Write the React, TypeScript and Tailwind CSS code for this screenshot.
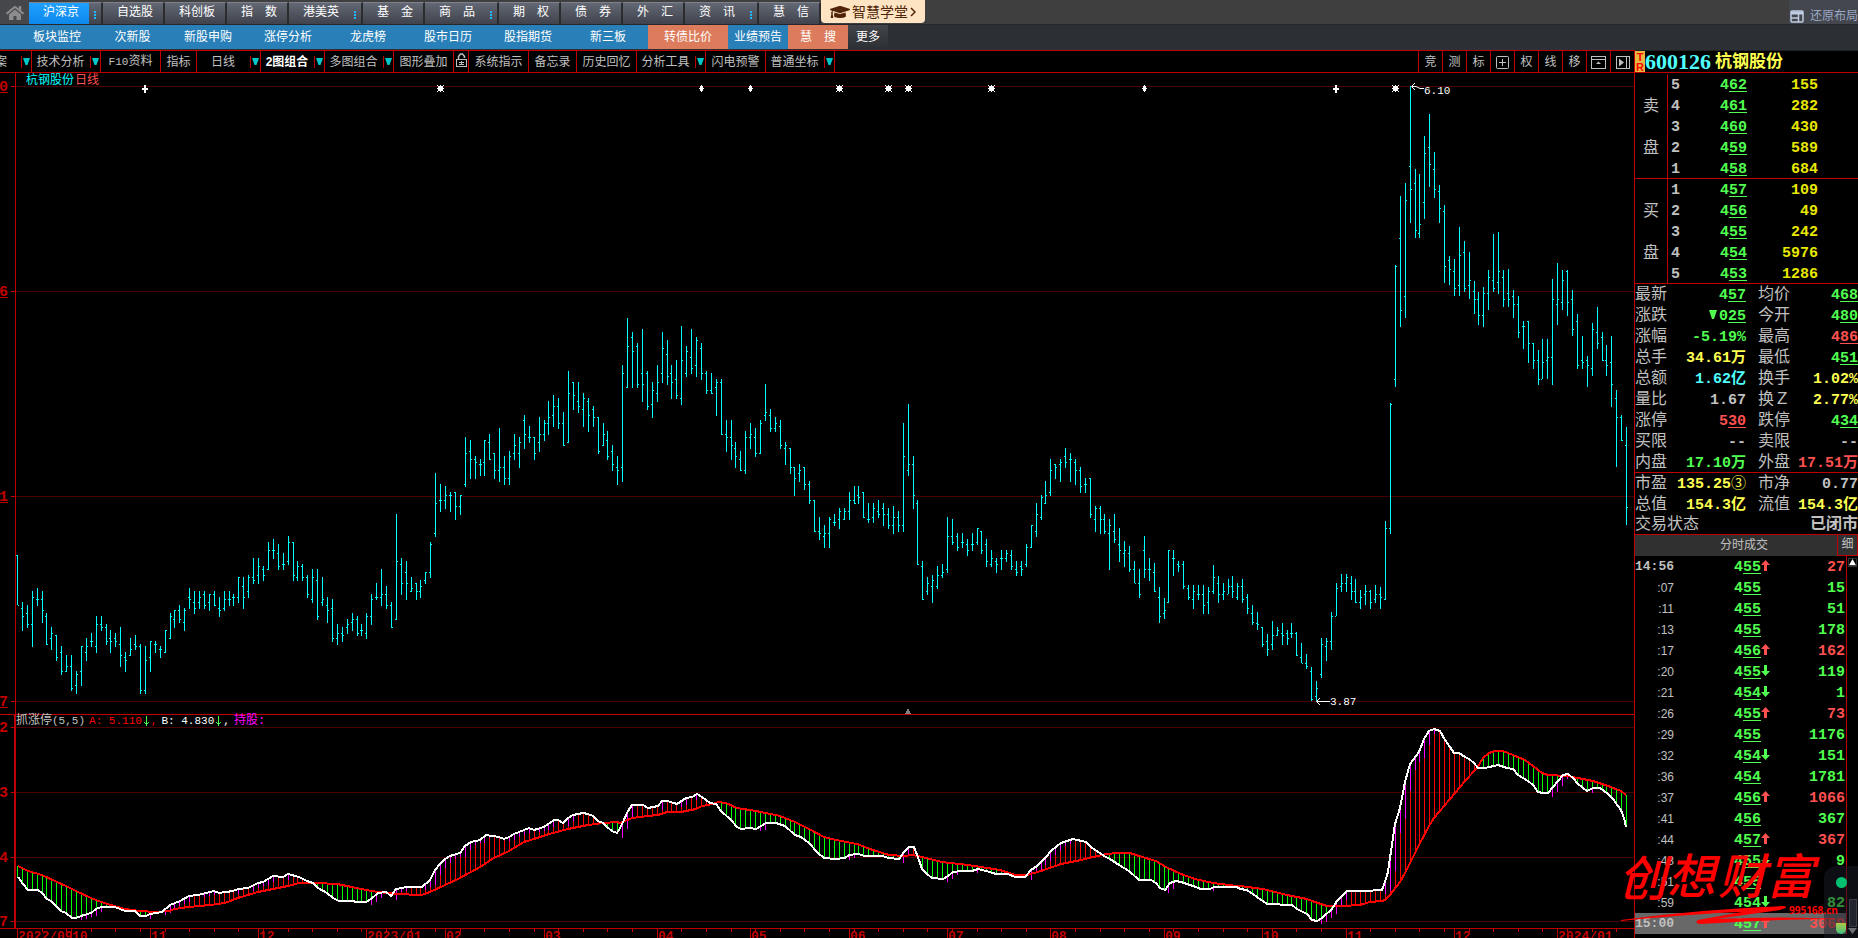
import React from "react";
import { FaGraduationCap, FaHome } from "react-icons/fa";

/* ---------- price data ---------- */

type Bar = [x: number, high: number, low: number, open: number, close: number];

interface Sheet {
  left: number;
  top: number;
  sx: number;
  sy: number;
  rows: string;
}

// Every row is "x high low open close", in the sheet's own units.
const priceSheets: Sheet[] = [
  {
    left: 0,
    top: 320,
    sx: 2.529,
    sy: 3,
    rows: `44 706 857 706 856,57 846 933 865 889,69 855 924 880 913,82 813 981 913 831,95 804 858 838 838,107 813 909 838 871,117 879 975 889 973,130 921 990 955 940,143 945 1023 946 1012,155 978 1065 997 1054,168 1005 1056 1054 1039,181 1005 1113 1039 1105,193 1053 1122 1096 1063,206 978 1098 1054 979,218 954 1023 997 979,231 939 981 964 964,244 888 999 979 913,256 888 933 913 922,269 912 975 922 964,279 930 999 955 964,292 939 981 955 964,304 921 1041 973 1006,317 996 1056 1012 1021,330 954 1008 1006 988,342 945 990 973 979,355 972 1122 979 1111,368 978 1122 1111 1021,380 963 1056 1012 964,393 963 999 973 973,406 978 1014 988 988,418 930 999 997 931,431 879 957 955 889,441 870 924 898 871,454 855 909 871 898,466 864 933 907 871,479 804 867 831 838,492 813 882 847 865,504 813 867 847 831,517 813 867 823 856,530 822 873 847 823,542 813 858 823 856,555 831 891 865 871,568 813 873 865 838,580 813 858 838 838,590 822 858 831 831,603 771 849 831 772,616 771 867 799 831,628 765 834 814 772,641 714 792 772 781,653 714 792 766 739,666 738 783 748 766,679 666 750 748 691,691 657 717 691 691,704 672 750 700 739,717 699 750 733 733,729 648 735 724 667,742 666 783 667 766,752 723 783 772 739,765 732 783 739 772,777 765 834 772 823,790 747 849 838 772,803 747 900 781 889,815 771 858 847 838,828 831 909 856 871,841 837 966 865 955,853 912 975 955 940,866 921 966 940 946,879 897 942 922 913,891 879 933 907 898,904 888 948 898 940,914 912 948 931 931,927 879 957 940 889,939 822 915 889 838,952 789 840 831 831,965 747 858 831 823,977 798 867 823 856,990 846 924 856 922,1002 582 900 898 724,1015 714 825 733 790,1028 723 840 757 790,1040 771 816 814 805,1053 789 840 790 814,1063 780 834 814 799,1076 756 792 781 757,1088 666 774 757 673,1101 459 651 640 550,1114 492 576 541 541,1126 498 567 541 526,1139 516 576 526 526,1151 516 600 517 559,1164 525 585 559 526,1177 351 501 493 400,1190 360 477 394 418,1202 408 477 418 427,1215 417 468 433 433,1225 360 468 427 361,1238 342 420 367 418,1250 399 477 400 451,1263 324 486 451 442,1275 408 495 442 475,1288 393 495 475 409,1301 342 420 400 376,1314 351 444 400 367,1326 285 387 301 343,1339 318 369 352 352,1351 351 420 352 400,1364 291 396 367 343,1376 300 363 343 310,1387 243 345 310 292,1400 225 321 286 259,1412 234 327 259 310,1425 276 378 310 376,1437 153 369 367 220,1450 186 270 187 226,1463 186 279 244 259,1475 219 321 268 235,1488 234 336 244 286,1500 258 321 268 292,1513 291 402 292 394,1526 309 378 376 343,1536 333 420 361 409,1549 375 453 394 433,1561 408 495 442 451`,
  },
  {
    left: 600,
    top: 300,
    sx: 3,
    sy: 3,
    rows: `67 195 546 502 220,82 54 264 262 139,97 96 264 112 154,112 129 264 139 253,127 87 306 220 253,142 213 330 220 319,157 246 354 313 271,172 195 306 280 247,187 96 249 220 145,202 120 255 163 229,214 195 297 220 247,229 180 297 238 286,244 78 315 295 181,259 138 231 220 154,274 87 222 172 205,289 111 231 196 121,304 129 240 145 220,319 213 282 220 271,334 219 282 271 280,349 237 348 262 247,364 237 405 247 403,379 360 456 403 412,394 360 480 412 436,406 426 504 445 469,421 453 513 478 511,436 393 522 511 412,451 369 447 412 403,466 384 471 412 460,481 360 462 460 370,496 252 363 346 337,511 327 396 346 385,526 351 396 385 370,541 360 447 379 436,556 426 495 445 436,571 444 522 445 502,583 501 588 502 535,598 492 546 520 511,613 501 570 502 553,628 543 612 553 601,643 600 696 601 694,658 651 720 694 700,673 675 744 709 700,688 651 744 700 658,703 642 678 667 667,718 624 687 658 634,733 624 660 658 634,748 576 660 634 601,763 558 612 601 610,775 558 612 586 592,790 576 654 577 652,805 609 669 658 658,820 609 669 652 625,835 600 654 634 643,850 609 678 625 643,865 624 687 643 676,880 618 702 676 652,895 633 696 652 676,910 369 696 676 469,925 312 528 511 493,940 468 627 493 586,952 600 795 610 793,967 783 900 799 898,982 831 885 874 850,997 825 909 859 841,1012 798 867 859 826,1027 792 834 826 817,1042 651 819 808 709,1057 657 735 709 727,1072 699 753 709 742,1087 699 744 727 727,1102 717 768 733 751,1117 699 753 733 733,1132 684 735 727 685,1144 693 762 694 751,1159 717 801 733 784,1174 750 801 793 775,1189 774 819 784 793,1204 750 810 775 775,1219 750 786 775 760,1234 750 810 766 799,1249 783 828 808 817,1264 783 828 799 808,1279 732 801 793 742,1294 675 744 742 676,1309 609 711 694 643,1324 585 660 652 592,1336 543 612 610 586,1351 477 588 577 511,1366 492 537 493 502,1381 477 546 493 487,1396 444 504 469 487,1411 459 546 478 478,1426 477 555 487 511,1441 501 579 511 559,1456 534 579 553 553,1471 534 654 535 643,1486 618 696 658 625,1501 618 702 625 658,1513 642 702 658 694,1528 657 810 700 676,1543 642 729 694 718,1558 684 786 733 750`,
  },
  {
    left: 1110,
    top: 70,
    sx: 2.958,
    sy: 2.45,
    rows: `42 1156 1218 1184 1177,57 1168 1232 1184 1224,72 1203 1259 1224 1258,87 1223 1294 1258 1285,102 1142 1245 1177 1224,116 1196 1252 1224 1224,131 1210 1279 1231 1277,146 1269 1355 1292 1339,161 1296 1347 1332 1324,173 1176 1306 1305 1177,187 1176 1240 1197 1197,202 1203 1232 1211 1216,217 1203 1272 1212 1266,232 1264 1299 1270 1292,247 1264 1321 1297 1277,261 1264 1299 1285 1285,276 1264 1333 1285 1312,291 1269 1333 1305 1277,306 1215 1286 1277 1243,320 1242 1306 1258 1285,335 1257 1299 1285 1277,350 1249 1286 1285 1265,362 1242 1294 1265 1277,377 1257 1299 1292 1265,391 1249 1306 1265 1297,406 1284 1333 1292 1319,421 1311 1360 1332 1353,436 1330 1374 1355 1358,451 1365 1414 1366 1407,465 1384 1436 1400 1420,480 1352 1421 1407 1385,495 1365 1387 1385 1373,510 1357 1409 1380 1385,525 1372 1409 1380 1392,536 1357 1394 1380 1380,551 1379 1436 1380 1434,566 1406 1455 1439 1453,581 1433 1468 1453 1461,596 1465 1548 1473 1542,610 1499 1548 1535 1515,625 1392 1490 1481 1407,640 1392 1448 1412 1400,655 1330 1421 1400 1339,670 1257 1340 1339 1270,684 1237 1279 1265 1258,699 1237 1279 1258 1243,714 1242 1299 1258 1277,726 1249 1306 1277 1304,741 1276 1321 1304 1292,755 1264 1313 1285 1277,770 1276 1321 1277 1304,785 1264 1306 1297 1285,800 1269 1321 1285 1292,815 1107 1299 1297 1123,829 818 1137 1123 820,844 480 779 758 482,859 311 630 413 589,874 277 610 555 319,889 40 375 236 292,903 243 414 278 393,915 257 414 400 379,930 162 367 324 204,945 108 287 190 231,960 203 314 244 292,974 284 375 297 339,989 331 522 346 481,1004 458 529 466 489,1019 465 556 493 535,1034 385 556 528 454,1048 419 544 447 535,1063 446 563 528 515,1078 519 598 542 562,1090 546 625 562 601,1105 534 630 601 548,1119 492 590 548 508,1134 404 544 515 535,1149 399 549 520 493,1164 492 583 508 562,1178 488 583 547 562,1193 541 610 555 574,1208 554 657 574 643,1223 615 684 628 628,1238 615 718 616 670,1252 669 733 670 711,1267 688 772 711 758,1279 661 759 758 716,1294 661 759 711 704,1309 514 772 704 562,1323 473 625 574 562,1338 492 590 569 515,1353 492 603 493 569,1368 541 652 562 635,1383 600 733 616 724,1397 654 733 711 716,1412 703 779 711 724,1427 622 752 731 635,1442 581 684 643 670,1457 642 713 655 711,1468 676 752 711 724,1483 654 826 716 770,1498 784 975 804 851,1513 846 909 851 907,1528 877 1117 919 1073`,
  },
];

const parseRows = (rows: string) => rows.split(",").map((row) => row.trim().split(" ").map(Number));

const bars: Bar[] = priceSheets.flatMap(({ left, top, sx, sy, rows }) =>
  parseRows(rows).map(([x, ...levels]) => {
    const [h, l, o, c] = levels.map((v) => Math.floor(top + v / sy));
    return [Math.floor(left + x / sx), h, l, o, c] as Bar;
  }),
);

/* ---------- indicator data ---------- */

const fastSheets: Sheet[] = [
  {
    left: 0,
    top: 690,
    sx: 2.529,
    sy: 3,
    rows: `45 560,57 583,70 600,95 600,107 608,118 626,130 633,143 650,155 663,168 669,181 684,193 684,206 679,231 669,244 656,256 650,290 650,304 658,317 663,342 663,355 679,368 679,380 671,410 665,431 644,454 634,479 618,500 615,542 604,555 608,590 604,603 596,628 594,653 580,666 577,691 559,715 561,729 552,755 562,777 574,792 578,803 593,828 610,841 623,858 632,890 632,904 636,925 636,939 626,957 609,975 607,990 618,1002 598,1030 591,1066 591,1088 570,1101 540,1114 522,1126 508,1139 498,1164 490,1177 468,1190 456,1215 449,1228 434,1262 440,1275 447,1288 442,1301 432,1338 414,1351 420,1376 410,1400 389,1412 389,1425 400,1437 384,1450 375,1475 370,1488 372,1500 379,1513 393,1526 398,1536 410,1549 422,1561 430`,
  },
  {
    left: 620,
    top: 690,
    sx: 2.529,
    sy: 3,
    rows: `0 414,8 395,19 364,31 345,57 345,70 354,95 349,107 332,120 333,145 343,167 325,183 322,195 312,207 320,228 339,243 341,256 362,280 390,295 411,306 417,330 413,345 417,368 400,395 398,418 408,442 434,458 442,479 460,500 490,515 504,545 507,568 503,580 496,602 491,620 497,662 497,680 503,705 507,717 485,731 470,743 470,755 510,765 537,777 553,790 563,817 567,829 557,841 547,865 542,890 542,905 536,925 543,950 551,980 551,1000 561,1025 560,1040 540,1054 528,1077 500,1090 482,1115 459,1145 446,1178 456,1190 471,1225 497,1240 508,1263 526,1287 542,1312 570,1343 570,1355 580,1366 594,1378 601,1390 580,1405 572,1420 575,1450 589,1470 597,1492 597,1503 590,1560 592`,
  },
  {
    left: 1240,
    top: 690,
    sx: 3,
    sy: 3,
    rows: `0 596,20 601,50 620,80 641,155 646,172 658,200 671,215 690,230 693,245 684,275 658,290 634,320 602,375 602,425 599,436 575,443 545,451 503,466 402,481 355,496 275,511 223,538 186,553 148,568 122,583 118,599 124,614 150,629 170,643 188,657 189,674 202,688 208,703 220,713 233,735 233,775 226,800 235,820 238,835 254,865 272,880 286,895 306,910 310,923 309,938 292,968 256,985 253,1000 265,1015 281,1042 303,1060 293,1080 294,1105 313,1120 327,1142 360,1152 383,1159 410`,
  },
];

const slowSheets: Sheet[] = [
  {
    left: 0,
    top: 690,
    sx: 2.529,
    sy: 3,
    rows: `45 529,70 543,107 555,143 575,168 587,193 604,231 624,256 635,280 646,317 656,355 663,393 667,431 663,441 657,479 650,530 645,568 638,603 624,653 607,691 596,729 588,755 580,800 578,853 583,890 591,939 603,1002 613,1066 614,1088 607,1126 585,1164 564,1190 546,1215 531,1250 504,1288 484,1326 457,1351 447,1388 433,1437 416,1488 405,1526 399,1561 397`,
  },
  {
    left: 620,
    top: 690,
    sx: 2.529,
    sy: 3,
    rows: `0 399,31 385,70 377,95 374,120 366,155 365,193 356,207 348,235 343,247 335,268 339,295 353,345 364,405 377,442 397,479 417,515 440,545 449,600 461,640 480,680 494,717 498,740 494,765 502,815 515,880 525,960 539,1000 554,1030 554,1065 542,1115 523,1165 509,1228 492,1260 488,1290 489,1312 498,1355 514,1380 532,1420 551,1455 567,1500 580,1560 587`,
  },
  {
    left: 1240,
    top: 690,
    sx: 3,
    sy: 3,
    rows: `0 587,70 598,140 616,200 627,215 634,260 647,310 648,360 644,390 637,425 634,436 629,451 614,481 575,496 548,511 520,538 466,568 407,583 385,629 327,674 274,710 233,730 205,748 188,765 182,790 182,820 195,855 210,880 229,905 248,925 254,980 257,1015 265,1060 274,1105 288,1142 303,1159 315`,
  },
];

const toCurve = (sheets: Sheet[]) =>
  sheets.flatMap(({ left, top, sx, sy, rows }) => parseRows(rows).map(([x, y]) => [left + x / sx, top + y / sy]));

const fast = toCurve(fastSheets);
const slow = toCurve(slowSheets);

const valueAt = (curve: number[][], x: number) => {
  const i = curve.findIndex((p) => p[0] >= x);
  if (i < 0) return curve[curve.length - 1][1];
  if (i === 0) return curve[0][1];
  const [x0, y0] = curve[i - 1];
  const [x1, y1] = curve[i];
  return y0 + ((y1 - y0) * (x - x0)) / (x1 - x0 || 1);
};

const toPoints = (curve: number[][]) => curve.map((p) => p.map(Math.round).join(",")).join(" ");

const spikes = bars.map(([x], i) => {
  const a = valueAt(slow, x);
  const b = valueAt(fast, x);
  const before = i ? valueAt(fast, bars[i - 1][0]) : b;
  return { x, a, b, before };
});

/* ---------- charts ---------- */

const stars = [440, 839, 888, 908, 991, 1395];
const diamonds = [701, 750, 1144];
const pluses = [145, 1336];

const Label = ({ x, y, children, line = true }: { x: number; y: number; children: string; line?: boolean }) => (
  <>
    <text x={x} y={y + 5} className="fill-[#c00000] font-['Liberation_Mono'] text-[15px] font-bold">
      {children}
    </text>
    {line && <rect x="0" y={y + 6} width="8" height="1" fill="#c00000" />}
    <rect x="11" y={y} width="4" height="1" fill="#c00000" />
  </>
);

function PriceChart() {
  return (
    <svg viewBox="0 73 1634 641" className="block w-full" shapeRendering="crispEdges" role="img" aria-label="杭钢股份日线">
      {[86, 291, 496, 701].map((y, i) => (
        <g key={y}>
          <rect x="16" y={y} width="1618" height="1" fill="#480000" />
          <Label x={-1} y={y}>{["0", "6", "1", "7"][i]}</Label>
        </g>
      ))}
      <rect x="15" y="73" width="1" height="641" fill="#c00000" />
      <g className="text-xs">
        <text x="26" y="84" fill="#00ffff">杭钢股份</text>
        <text x="75" y="84" fill="#ff5050">日线</text>
      </g>
      <g fill="#00ffff">
        {bars.map(([x, h, l, o, c]) => (
          <g key={x}>
            <rect x={x} y={h} width="1" height={l - h} />
            <rect x={x - 1} y={o} width="1" height="1" />
            <rect x={x + 1} y={c} width="1" height="1" />
          </g>
        ))}
      </g>
      <g fill="#fff">
        {stars.map((x) => (
          <g key={x}>
            <rect x={x - 2} y="86" width="5" height="5" />
            <path d={`M${x - 3} 85h1v1h-1z M${x + 3} 85h1v1h-1z M${x - 3} 91h1v1h-1z M${x + 3} 91h1v1h-1z M${x} 85h1v7h-1z M${x - 3} 88h7v1h-7z`} />
          </g>
        ))}
        {diamonds.map((x) => (
          <path key={x} d={`M${x} 85h1v1h1v2h1v1h-1v2h-1v1h-1v-1h-1v-2h-1v-1h1v-2h1z`} />
        ))}
        {pluses.map((x) => (
          <path key={x} d={`M${x - 1} 85h2v3h2v2h-2v3h-2v-3h-2v-2h2z`} />
        ))}
      </g>
      <g fill="none" stroke="#fff" shapeRendering="auto">
        <path d="M1415 83L1411.5 86.5L1415 90M1412 86.5h4l4 2h4" />
        <path d="M1320 698L1316.5 701.5L1320 705M1317 701.5h13" />
      </g>
      <g className="fill-white font-['Liberation_Mono'] text-[11px]">
        <text x="1424" y="94">6.10</text>
        <text x="1330" y="705">3.87</text>
      </g>
      <path d="M908 708l3 6h-6z" fill="#808080" />
    </svg>
  );
}

const months: [number, string][] = [
  [17, "2022/09"], [71, "10"], [150, "11"], [258, "12"], [366, "2023/01"], [445, "02"], [544, "03"], [657, "04"],
  [750, "05"], [849, "06"], [947, "07"], [1050, "08"], [1164, "09"], [1262, "10"], [1346, "11"], [1454, "12"], [1557, "2024/01"],
];

const DownMark = () => (
  <svg width="5" height="10" viewBox="0 0 5 10" className="mx-0.5 inline-block" shapeRendering="crispEdges" aria-hidden="true">
    <path d="M2 0h1v10H2zM1 7h3v1H1zM0 6h1v1H0zM4 6h1v1H4z" fill="#50ff50" />
  </svg>
);

function IndicatorChart() {
  return (
    <div className="relative">
      <svg viewBox="0 714 1634 224" className="block w-full" shapeRendering="crispEdges" role="img" aria-label="抓涨停">
        <rect x="0" y="714" width="1634" height="1" fill="#c00000" />
        {[727, 792, 857, 921].map((y, i) => (
          <g key={y}>
            <rect x="16" y={y} width="1618" height="1" fill="#480000" />
            <Label x={-1} y={y} line={false}>{["2", "3", "4", "7"][i]}</Label>
          </g>
        ))}
        <rect x="14" y="714" width="2" height="215" fill="#c00000" />
        <rect x="0" y="928" width="1634" height="1" fill="#c00000" />
        {bars.filter((_, i) => i % 5 === 0).map(([x]) => (
          <rect key={x} x={x} y="929" width="1" height="3" fill="#c00000" />
        ))}
        {months.map(([x, text]) => (
          <g key={x} fill="#c00000">
            <rect x={x} y="929" width="1" height="9" />
            <text x={x + 1} y="940" className="font-['Liberation_Mono'] text-[13px] font-bold">{text}</text>
          </g>
        ))}
        {spikes.map(({ x, a, b }) => (
          <rect key={x} x={x} y={Math.min(a, b)} width="1" height={Math.abs(a - b)} fill={b > a ? "#00ff00" : "#ff0000"} />
        ))}
        {spikes.filter((s) => s.before - s.b > 1).map(({ x, b, before }) => (
          <rect key={x} x={x} y={b} width="1" height={(before - b) * 1.3 + 2} fill="#ff00ff" />
        ))}
        <polyline points={toPoints(slow)} fill="none" stroke="#ff0000" strokeWidth="2" />
        <polyline points={toPoints(fast)} fill="none" stroke="#fff" strokeWidth="2" />
      </svg>
      <p className="absolute left-4 top-px flex items-center gap-1 font-['Liberation_Mono','Noto_Sans_CJK_SC',monospace] text-[11px] leading-3 text-[#c0c0c0]">
        <span><span className="text-xs leading-3">抓涨停</span>(5,5)</span>
        <span className="flex items-center text-[#ff0000]">A: 5.110<DownMark />,</span>
        <span className="flex items-center text-white">B: 4.830<DownMark />,</span>
        <span className="text-xs leading-3 text-[#ff00ff]">持股:</span>
      </p>
    </div>
  );
}

/* ---------- top bars ---------- */

const markets: [string, boolean?][] = [
  ["沪深京", true], ["自选股"], ["科创板"], ["指　数"], ["港美英", true], ["基　金"], ["商　品", true],
  ["期　权"], ["债　券"], ["外　汇"], ["资　讯", true], ["慧　信"],
];

const Dots = () => (
  <span className="mt-2 flex w-3 flex-col items-center gap-px">
    <i className="size-0.5 bg-[#20b8ff]" />
    <i className="size-0.5 bg-[#20b8ff]" />
    <i className="size-0.5 bg-[#20b8ff]" />
  </span>
);

function MarketBar() {
  return (
    <nav className="flex h-6 items-stretch overflow-hidden bg-[#3f3f3f] text-xs text-white">
      <button aria-label="首页" className="flex w-[29px] shrink-0 items-end justify-center bg-[#45474b] pb-0.5 text-[#8c8c8c]">
        <FaHome size={18} />
      </button>
      {markets.map(([name, more], i) => (
        <span key={name} className={`mt-0.5 flex shrink-0 border-r-2 border-t border-r-[#2c2c2e] border-t-[#7d828c] bg-linear-to-b from-[#636874] to-[#40434c] ${more ? "w-[74px]" : "w-[62px]"}`}>
          <button className={`flex-1 pb-1 pl-1 ${i === 0 ? "bg-linear-to-b from-[#20a0ff] to-[#0c88ec]" : ""}`}>{name}</button>
          {more && <Dots />}
        </span>
      ))}
      <button className="mb-px flex w-[104px] shrink-0 items-center justify-center gap-0.5 rounded-b-sm bg-[#fee4c2] text-sm leading-5 text-[#502408]">
        <FaGraduationCap size={20} />
        智慧学堂
        <svg width="6" height="10" viewBox="0 0 6 10" fill="none" stroke="currentColor" strokeWidth="1.5"><path d="M1 1l4 4-4 4" /></svg>
      </button>
      <button className="ml-auto flex shrink-0 items-center gap-1.5 bg-[#44474e] pl-px pt-2 text-[#9aa8c4]">
        <svg width="14" height="13" viewBox="0 0 14 13" fill="none" stroke="#c0cde4" strokeWidth="1.5">
          <rect x="1" y="1" width="12" height="11" rx="1" />
          <path d="M1 3h12" strokeWidth="3" />
          <path d="M8.5 4v8M1 8h7" />
        </svg>
        <span className="w-12 whitespace-nowrap">还原布局</span>
      </button>
    </nav>
  );
}

const topics: [string, string][] = [
  ["板块监控", "w-20 bg-[#2980b9]"], ["次新股", "w-[71px] bg-[#2980b9]"], ["新股申购", "w-20 bg-[#2980b9]"],
  ["涨停分析", "w-20 bg-[#2980b9]"], ["龙虎榜", "w-20 bg-[#2980b9]"], ["股市日历", "w-20 bg-[#2980b9]"],
  ["股指期货", "w-20 bg-[#2980b9]"], ["新三板", "w-20 bg-[#2980b9]"], ["转债比价", "w-20 bg-[#dc7c5c]"],
  ["业绩预告", "w-[60px] bg-[#2980b9]"], ["慧　搜", "w-[60px] bg-[#dc7c5c]"], ["更多", "w-10 bg-linear-to-b from-[#42454a] to-[#2c2f33]"],
];

function TopicBar() {
  return (
    <nav className="flex h-[26px] overflow-hidden border-t border-[#25272a] bg-[#2c2f33] pb-px text-xs text-white">
      <span className="w-[17px] shrink-0 bg-[#2980b9]" />
      {topics.map(([name, look]) => (
        <button key={name} className={`shrink-0 ${look}`}>{name}</button>
      ))}
    </nav>
  );
}

const LockIcon = () => (
  <svg width="11" height="14" viewBox="0 0 11 14" fill="none" stroke="#c0c0c0" strokeWidth="1" className="mb-1">
    <path d="M2.500 6.500V3.500L4.500 1h2l2 2.500V5" strokeWidth="1.5" />
    <rect x=".5" y="6.500" width="10" height="7" />
    <path d="M3 9.500h5M3 11.500h5M5.500 8v4" />
  </svg>
);

const tools: { name: React.ReactNode; label?: string; width: string; menu?: boolean; strong?: boolean }[] = [
  { name: "技术分析", width: "w-[69px]", menu: true },
  { name: <span className="font-['Liberation_Mono','Noto_Sans_CJK_SC',monospace]"><span className="text-[11px]">F10</span>资料</span>, label: "F10资料", width: "w-[60px]" },
  { name: "指标", width: "w-9" },
  { name: "日线", width: "w-16", menu: true },
  { name: "2图组合", width: "w-16", menu: true, strong: true },
  { name: "多图组合", width: "w-[69px]", menu: true },
  { name: "图形叠加", width: "w-[60px]" },
  { name: <LockIcon />, label: "锁定", width: "w-[15px]" },
  { name: "系统指示", width: "w-[60px]" },
  { name: "备忘录", width: "w-12" },
  { name: "历史回忆", width: "w-[60px]" },
  { name: "分析工具", width: "w-[69px]", menu: true },
  { name: "闪电预警", width: "w-[60px]" },
  { name: "普通坐标", width: "w-[69px]", menu: true },
];

const MenuArrow = () => (
  <span className="flex w-[11px] shrink-0 items-center justify-center self-stretch">
    <svg width="10" height="14" viewBox="0 0 10 14" aria-hidden="true">
      <path d="M0 1h1v12H0z" fill="#c00000" />
      <path d="M2 3h7L6.500 10h-2z" fill="#00c8c8" />
    </svg>
  </span>
);

const quickTools: [string, React.ReactNode][] = [
  ["竞", "竞"], ["测", "测"], ["标", "标"],
  ["田", <svg key="a" width="13" height="13" viewBox="0 0 13 13" fill="none" stroke="currentColor"><rect x=".5" y=".5" width="12" height="12" rx="1" /><path d="M6.500 3v7M3 6.500h7" /></svg>],
  ["权", "权"], ["线", "线"], ["移", "移"],
  ["展开", <svg key="b" width="15" height="13" viewBox="0 0 15 13" fill="none" stroke="currentColor"><rect x=".5" y=".5" width="14" height="12" /><path d="M1 3.500h13" /><path d="M5 8h5L7.500 5.500z" fill="currentColor" stroke="none" /></svg>],
  ["收起", <svg key="c" width="14" height="13" viewBox="0 0 14 13" fill="none" stroke="currentColor"><rect x=".5" y=".5" width="13" height="12" /><path d="M10.500 1v11" /><path d="M3 2.500v8L8 6.500z" fill="currentColor" stroke="none" /></svg>],
];

function ToolBar() {
  return (
    <div className="flex h-[23px] overflow-hidden border-y border-[#c00000] text-xs text-[#c0c0c0]">
      <button className="flex w-8 shrink-0 items-center justify-between border-r border-[#c00000]">
        <span className="flex w-[7px] justify-end overflow-hidden whitespace-nowrap">案</span>
        <MenuArrow />
      </button>
      {tools.map(({ name, label, width, menu, strong }, i) => (
        <button key={i} aria-label={label} className={`flex shrink-0 items-center border-r border-[#c00000] pt-px ${width} ${strong ? "font-bold text-white" : ""}`}>
          <span className="flex flex-1 justify-center whitespace-nowrap">{name}</span>
          {menu && <MenuArrow />}
        </button>
      ))}
      <div className="ml-auto flex">
        {quickTools.map(([label, face]) => (
          <button key={label} aria-label={label} className="flex w-6 items-center justify-center border-l border-[#c00000] pt-px">
            {face}
          </button>
        ))}
      </div>
    </div>
  );
}

/* ---------- quote panel ---------- */

const Price = ({ value }: { value: string }) => (
  <>
    {value[0]}
    <span className="underline decoration-1 underline-offset-2">{value.slice(1)}</span>
  </>
);

const asks: [string, string, string][] = [["5", "462", "155"], ["4", "461", "282"], ["3", "460", "430"], ["2", "459", "589"], ["1", "458", "684"]];
const bids: [string, string, string][] = [["1", "457", "109"], ["2", "456", "49"], ["3", "455", "242"], ["4", "454", "5976"], ["5", "453", "1286"]];

function Depth({ side, levels }: { side: string; levels: [string, string, string][] }) {
  return (
    <div className="flex shadow-[inset_0_-1px_0_#c00000]">
      <div className="flex w-[33px] flex-col items-center justify-between border-r border-[#c00000] pt-[23px] pb-[19px] text-base leading-[21px] font-normal text-[#c0c0c0]">
        <span>{side}</span>
        <span>盘</span>
      </div>
      <table className="flex-1 table-fixed">
        <tbody>
          {levels.map(([level, price, volume]) => (
            <tr key={level} className="h-[21px]">
              <td className="w-6 p-0 pt-0.5 pl-[3px] text-[#c0c0c0]">{level}</td>
              <td className="w-[55px] p-0 pt-0.5 text-right text-[#50ff50]"><Price value={price} /></td>
              <td className="p-0 pt-0.5 pr-10 text-right text-[#e8e800]">{volume}</td>
            </tr>
          ))}
        </tbody>
      </table>
    </div>
  );
}

const G = "text-[#50ff50]";
const R = "text-[#ff5050]";
const Y = "text-[#ffff50]";
const W = "text-[#c0c0c0]";

type Pair = [string, React.ReactNode, string, string, React.ReactNode, string];

const quotes: Pair[] = [
  ["最新", <Price value="457" />, G, "均价", <Price value="468" />, G],
  ["涨跌", <><svg className="mr-0.5 inline-block align-baseline" width="8" height="10" viewBox="0 0 8 10"><path d="M0 0h8L5 9H3z" fill="currentColor" /></svg><Price value="025" /></>, G, "今开", <Price value="480" />, G],
  ["涨幅", "-5.19%", G, "最高", <Price value="486" />, R],
  ["总手", "34.61万", Y, "最低", <Price value="451" />, G],
  ["总额", "1.62亿", "text-[#50ffff]", "换手", "1.02%", Y],
  ["量比", "1.67", W, "换Ｚ", "2.77%", Y],
  ["涨停", <Price value="530" />, R, "跌停", <Price value="434" />, G],
  ["买限", "--", W, "卖限", "--", W],
  ["内盘", "17.10万", G, "外盘", "17.51万", R],
];

const ratios: Pair[] = [
  ["市盈", <>135.25<span className="font-normal">③</span></>, Y, "市净", "0.77", W],
  ["总值", "154.3亿", Y, "流值", "154.3亿", Y],
];

const PairRows = ({ rows }: { rows: Pair[] }) => (
  <>
    {rows.map(([a, av, ac, b, bv, bc]) => (
      <dl key={a} className="flex h-[21px] items-center pt-0.5 whitespace-nowrap">
        <dt className="w-8 text-base leading-[19px] font-normal text-[#c0c0c0]">{a}</dt>
        <dd className={`w-[79px] text-right leading-[19px] ${ac}`}>{av}</dd>
        <dt className="ml-3 w-8 text-base leading-[19px] font-normal text-[#c0c0c0]">{b}</dt>
        <dd className={`flex flex-1 justify-end leading-[19px] ${bc}`}><span>{bv}</span></dd>
      </dl>
    ))}
  </>
);

type Tick = [time: string, price: string, move: "" | "up" | "down", volume: string, red?: boolean];

const ticks: Tick[] = [
  ["14:56", "455", "up", "27", true], [":07", "455", "", "15"], [":11", "455", "", "51"], [":13", "455", "", "178"],
  [":17", "456", "up", "162", true], [":20", "455", "down", "119"], [":21", "454", "down", "1"], [":26", "455", "up", "73", true],
  [":29", "455", "", "1176"], [":32", "454", "down", "151"], [":36", "454", "", "1781"], [":37", "456", "up", "1066", true],
  [":41", "456", "", "367"], [":44", "457", "up", "367", true], [":48", "455", "down", "9"], [":51", "455", "", ""],
  [":59", "454", "down", "82"], ["15:00", "457", "up", "3069", true],
];

const MoveArrow = ({ move }: { move: "up" | "down" }) => (
  <svg width="9" height="11" viewBox="0 0 9 11" className="inline-block align-baseline" aria-label={move === "up" ? "升" : "降"}>
    <path d={move === "up" ? "M4.500 0L9 5H6v6H3V5H0z" : "M4.500 11L0 6h3V0h3v6h3z"} fill={move === "up" ? "#ff5050" : "#50ff50"} />
  </svg>
);

function QuotePanel() {
  return (
    <aside className="w-56 shrink-0 overflow-hidden border-l border-[#c00000] font-['Liberation_Mono','Noto_Sans_CJK_SC',monospace] text-[15px] leading-[19px] font-bold">
      <header className="mb-px flex h-[23px] items-center overflow-hidden border-y border-b-[#c00000] border-t-[#202224]">
        <span className="flex h-full w-[10px] flex-col items-center justify-center bg-[#e8b840] font-['Liberation_Sans'] text-[11px] leading-[10px] text-[#ff0000]">
          <i className="not-italic">T</i>
          <i className="not-italic">R</i>
        </span>
        <span className="font-['Liberation_Serif'] text-[22px] text-[#50ffff]">600126</span>
        <h1 className="ml-1 pt-0.5 text-[17px] text-[#ffff50]">杭钢股份</h1>
      </header>
      <Depth side="卖" levels={asks} />
      <Depth side="买" levels={bids} />
      <section className="shadow-[inset_0_-1px_0_#c00000]"><PairRows rows={quotes} /></section>
      <section className="shadow-[inset_0_-1px_0_#c00000]">
        <PairRows rows={ratios} />
        <div className="flex h-5 items-center justify-between pt-px text-base leading-[19px] text-[#c0c0c0]">
          <span className="font-normal">交易状态</span>
          <span>已闭市</span>
        </div>
      </section>
      <div className="flex h-[21px] bg-[#303030] text-xs leading-5 font-normal text-[#c0c0c0]">
        <h2 className="flex-1 pt-px pl-4 text-center leading-[21px]">分时成交</h2>
        <button className="w-[21px] border border-t-0 border-[#c00000]">细</button>
      </div>
      <div className="flex">
        <table className="flex-1 table-fixed border-r border-[#c00000]">
          <tbody>
            {ticks.map(([time, price, move, volume, red], i) => (
              <tr key={time} className={`h-[21px] ${i === ticks.length - 1 ? "bg-[#686868]" : ""}`}>
                <td className={`w-[38px] p-0 text-right text-[#c0c0c0] ${time.length > 3 ? "text-[13px]" : "font-['Liberation_Sans'] text-xs font-normal"}`}>{time}</td>
                <td className={`w-[98px] p-0 pt-0.5 pl-[60px] whitespace-nowrap ${G}`}>
                  <Price value={price} />
                  {move && <MoveArrow move={move} />}
                </td>
                <td className={`p-0 pt-0.5 pr-px text-right ${red ? R : G}`}>{volume}</td>
              </tr>
            ))}
          </tbody>
        </table>
        <div className="flex w-[11px] flex-col items-center pt-0.5">
          <svg width="9" height="9" viewBox="0 0 9 9" className="border border-[#303030]"><path d="M4.500 0L9 8H0z" fill="#fff" /></svg>
          <i className="mt-auto h-7 w-2 border border-[#606068] bg-[#2a2c32]" />
          <svg width="9" height="7" viewBox="0 0 9 7"><path d="M0 1h9L4.500 7z" fill="#c0c0c0" /></svg>
        </div>
      </div>
    </aside>
  );
}

/* ---------- floating layers ---------- */

function FloatingBall() {
  return (
    <div className="pointer-events-none absolute right-0 bottom-0 flex h-[72px] w-[34px] flex-col items-center justify-between overflow-hidden rounded-tl-xl bg-[#181c26]/50 pt-[11px]">
      <i className="size-[11px] rounded-full bg-[#00c070]" />
      <i className="mb-1 h-[11px] w-[10px] rounded-b-full bg-linear-to-b from-[#a8c840] to-[#30c080]" />
    </div>
  );
}

function Watermark() {
  return (
    <svg className="pointer-events-none absolute right-0 bottom-0" width="248" height="98" viewBox="1610 840 248 98" fill="#ff0000">
      <g className="text-[48px] font-medium italic">
        <text x="1618" y="896">创</text>
        <text x="1667" y="894">想</text>
        <text x="1718" y="894">财</text>
        <text x="1766" y="894">富</text>
      </g>
      <path d="M1621 920Q1700 909 1784 906Q1790 907 1780 910L1716 919Q1780 916 1843 919Q1770 919 1700 924Q1694 923 1698 920L1742 912Q1690 914 1621 921z" />
      <text x="1789" y="914" className="font-['Open_Sans'] text-[10px] font-bold">995168.cn</text>
    </svg>
  );
}

export default function App() {
  return (
    <div className="relative flex h-screen flex-col overflow-hidden bg-black font-['Liberation_Sans','Noto_Sans_CJK_SC',sans-serif]">
      <MarketBar />
      <TopicBar />
      <div className="flex min-h-0 flex-1">
        <main className="min-w-0 flex-1">
          <ToolBar />
          <PriceChart />
          <IndicatorChart />
        </main>
        <QuotePanel />
      </div>
      <FloatingBall />
      <Watermark />
    </div>
  );
}
